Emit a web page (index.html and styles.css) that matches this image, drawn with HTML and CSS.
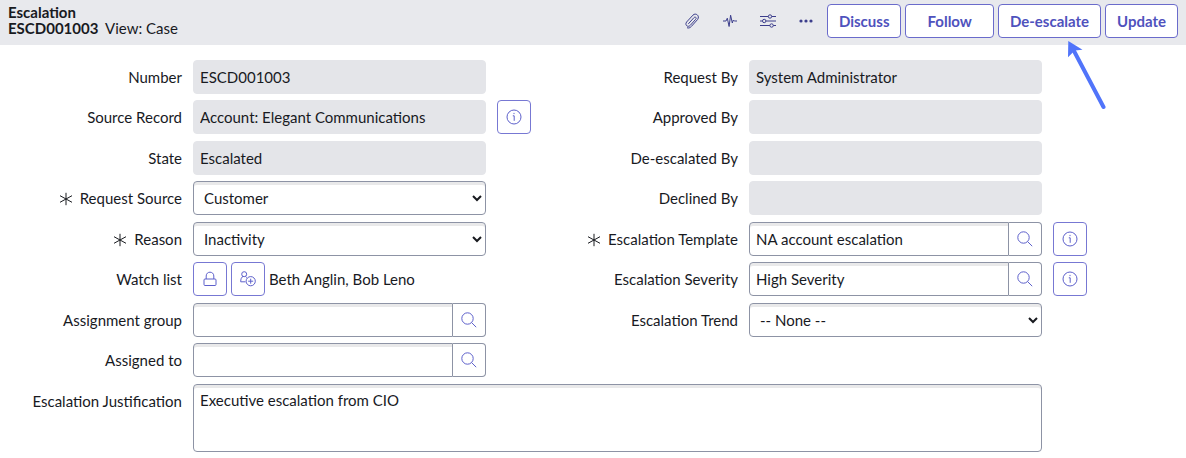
FILE: index.html
```html
<!DOCTYPE html>
<html lang="en">
<head>
  <meta charset="UTF-8">
  <meta name="viewport" content="width=device-width, initial-scale=1.0">
  <title>Escalation | ESCD001003</title>
  <link rel="stylesheet" href="styles.css">
</head>
<body>
  <!-- Shared icons -->
  <svg class="sprite" aria-hidden="true">
    <symbol id="icon-search" viewBox="0 0 16 16">
      <circle cx="6.5" cy="6.5" r="5.7"/>
      <path d="M10.6 10.6L15.2 15.2"/>
    </symbol>
    <symbol id="icon-info" viewBox="0 0 16 16">
      <circle cx="8" cy="8" r="7"/>
      <path d="M6.8 6.8H8.2V11.8M8 3.9V5.1"/>
    </symbol>
    <symbol id="icon-required" viewBox="0 0 14 14">
      <path d="M7 .8V13.2M1 3.7L13 10.3M13 3.7L1 10.3"/>
    </symbol>
  </svg>

  <header class="header">
    <h1 class="title">Escalation<br>ESCD001003 <span class="view">View: Case</span></h1>
    <div class="actions">
      <button class="icon-btn" aria-label="Attachments">
        <svg class="icon" viewBox="0 0 16 16"><path d="M4.3 10.9L9.9 4.7C11.3 3.2 13 4.8 11.7 6.3L6.2 12.4C4.2 14.7.3 12.3 2.6 9L9 2.1C11.6-.6 16.2 2.7 13.6 6.5L7.3 13.5C6 14.9 4.4 15.4 3 14.7"/></svg>
      </button>
      <button class="icon-btn" aria-label="Activity">
        <svg class="icon" viewBox="0 0 16 16"><path d="M1 8H4L5.3 5.2L7.1 13.5L8.6 2.2L10.3 10L11.3 7L12.3 8H15"/></svg>
      </button>
      <button class="icon-btn" aria-label="Personalize form">
        <svg class="icon" viewBox="0 0 16 16"><path d="M0 3.5H8.3M11.7 3.5H16M0 8H2.5M5.9 8H16M0 12.5H9.9M13.3 12.5H16"/><circle cx="10" cy="3.5" r="1.7"/><circle cx="4.2" cy="8" r="1.7"/><circle cx="11.6" cy="12.5" r="1.7"/></svg>
      </button>
      <button class="icon-btn" aria-label="More options">
        <svg class="icon dots" viewBox="0 0 16 16"><circle cx="3" cy="8" r="1.6"/><circle cx="8" cy="8" r="1.6"/><circle cx="13" cy="8" r="1.6"/></svg>
      </button>
      <button class="btn">Discuss</button>
      <button class="btn btn-wide">Follow</button>
      <div class="pointed">
        <button class="btn">De-escalate</button>
        <svg class="arrow" viewBox="0 0 40 70" aria-hidden="true"><path class="arrow-line" d="M8 11L37.5 67"/><path class="arrow-head" d="M2.3 1L16.5 9.7L8.8 10.6L2 17.3Z"/></svg>
      </div>
      <button class="btn">Update</button>
    </div>
  </header>

  <form class="form">
    <div class="columns">
      <div class="column">
        <div class="row">
          <label for="number">Number</label>
          <input id="number" class="field" type="text" value="ESCD001003" readonly>
        </div>
        <div class="row">
          <label for="source">Source Record</label>
          <input id="source" class="field" type="text" value="Account: Elegant Communications" readonly>
          <button type="button" class="square-btn" aria-label="Preview source record"><svg class="icon"><use href="#icon-info"/></svg></button>
        </div>
        <div class="row">
          <label for="state">State</label>
          <input id="state" class="field" type="text" value="Escalated" readonly>
        </div>
        <div class="row">
          <label for="requestSource"><svg class="required"><use href="#icon-required"/></svg>Request Source</label>
          <select id="requestSource" class="field"><option>Customer</option></select>
        </div>
        <div class="row">
          <label for="reason"><svg class="required"><use href="#icon-required"/></svg>Reason</label>
          <select id="reason" class="field"><option>Inactivity</option></select>
        </div>
        <div class="row">
          <span class="label">Watch list</span>
          <div class="watch">
            <button type="button" class="square-btn" aria-label="Unlock watch list">
              <svg class="icon" viewBox="0 0 16 16"><rect x="2" y="8" width="12" height="6.5" rx="1"/><path d="M4.2 8V5C4.2-.1 11.8-.1 11.8 5V8"/></svg>
            </button>
            <button type="button" class="square-btn" aria-label="Add me">
              <svg class="icon" viewBox="0 0 16 16"><circle cx="4.2" cy="3.2" r="2.5"/><path d="M3 5.4C1.4 6.2.7 8 .7 10.8H5.4M5.5 5.4L6.8 6.6"/><circle cx="10.7" cy="10.2" r="4.6"/><path d="M10.7 7.7V12.7M8.2 10.2H13.2"/></svg>
            </button>
            <span>Beth Anglin, Bob Leno</span>
          </div>
        </div>
        <div class="row">
          <label for="group">Assignment group</label>
          <div class="lookup">
            <input id="group" class="field" type="text">
            <button type="button" aria-label="Look up assignment group"><svg class="icon"><use href="#icon-search"/></svg></button>
          </div>
        </div>
        <div class="row">
          <label for="assigned">Assigned to</label>
          <div class="lookup">
            <input id="assigned" class="field" type="text">
            <button type="button" aria-label="Look up assigned to"><svg class="icon"><use href="#icon-search"/></svg></button>
          </div>
        </div>
      </div>

      <div class="column">
        <div class="row">
          <label for="requestBy">Request By</label>
          <input id="requestBy" class="field" type="text" value="System Administrator" readonly>
        </div>
        <div class="row">
          <label for="approvedBy">Approved By</label>
          <input id="approvedBy" class="field" type="text" readonly>
        </div>
        <div class="row">
          <label for="deescalatedBy">De-escalated By</label>
          <input id="deescalatedBy" class="field" type="text" readonly>
        </div>
        <div class="row">
          <label for="declinedBy">Declined By</label>
          <input id="declinedBy" class="field" type="text" readonly>
        </div>
        <div class="row">
          <label for="template"><svg class="required"><use href="#icon-required"/></svg>Escalation Template</label>
          <div class="lookup">
            <input id="template" class="field" type="text" value="NA account escalation">
            <button type="button" aria-label="Look up template"><svg class="icon"><use href="#icon-search"/></svg></button>
          </div>
          <button type="button" class="square-btn" aria-label="Preview template"><svg class="icon"><use href="#icon-info"/></svg></button>
        </div>
        <div class="row">
          <label for="severity">Escalation Severity</label>
          <div class="lookup">
            <input id="severity" class="field" type="text" value="High Severity">
            <button type="button" aria-label="Look up severity"><svg class="icon"><use href="#icon-search"/></svg></button>
          </div>
          <button type="button" class="square-btn" aria-label="Preview severity"><svg class="icon"><use href="#icon-info"/></svg></button>
        </div>
        <div class="row">
          <label for="trend">Escalation Trend</label>
          <select id="trend" class="field"><option>-- None --</option></select>
        </div>
      </div>
    </div>

    <div class="row">
      <label for="justification">Escalation Justification</label>
      <textarea id="justification" class="field">Executive escalation from CIO</textarea>
    </div>
  </form>
</body>
</html>
```
FILE: styles.css
```css
* {
  box-sizing: border-box;
}
body {
  margin: 0;
  background: #fff;
  color: #181a1f;
  font-family: Lato, "Liberation Sans", sans-serif;
  font-size: 15px;
  line-height: 18px;
}
button, input, select, textarea {
  margin: 0;
  font: inherit;
  color: inherit;
}
button {
  padding: 0;
  cursor: pointer;
}
.sprite {
  display: none;
}
symbol, .icon, .required {
  fill: none;
  stroke: currentColor;
}
.icon {
  display: block;
  width: 16px;
  height: 16px;
}

/* Header */
.header {
  display: flex;
  justify-content: space-between;
  align-items: flex-start;
  min-height: 45px;
  padding: 4px 8px 0;
  background: #e8e9ed;
}
.title {
  margin: 0;
  font-size: 15px;
  line-height: 16px;
  font-weight: bold;
}
.view {
  margin-left: 3px;
  font-weight: normal;
}
.actions {
  display: flex;
  gap: 4px;
}
.icon-btn {
  display: flex;
  align-items: center;
  justify-content: center;
  width: 34px;
  height: 34px;
  border: 0;
  background: none;
  color: #3c3e8c;
}
.dots {
  fill: currentColor;
  stroke: none;
}
.btn {
  height: 34px;
  padding: 0 11px;
  border: 1px solid #6a6bcb;
  border-radius: 4px;
  background: #fff;
  color: #4f52bd;
  font-weight: bold;
}
.btn-wide {
  padding: 0 21px;
}
.pointed {
  position: relative;
}
.arrow {
  position: absolute;
  top: 36px;
  right: -5px;
  width: 40px;
  height: 70px;
}
.arrow-line {
  fill: none;
  stroke: #5174fa;
  stroke-width: 4;
  stroke-linecap: round;
}
.arrow-head {
  fill: #5174fa;
}

/* Form */
.form {
  padding: 15px 74px 6px 0;
}
.columns {
  display: grid;
  grid-template-columns: 1fr 1fr;
}
.row {
  display: grid;
  grid-template-columns: 182px minmax(0, 1fr) 59px;
  column-gap: 11px;
  margin-bottom: 6px;
}
.row:nth-child(even) {
  margin-bottom: 7px;
}
label, .label {
  padding-top: 8px;
  text-align: right;
}
.required {
  width: 14px;
  height: 14px;
  margin-right: 7px;
  vertical-align: -2px;
}
.field {
  width: 100%;
  height: 34px;
  padding: 0 6px;
  border: 1px solid #8d93a5;
  border-radius: 4px;
  background: #fff;
  box-shadow: inset 0 3px 0 #e9e9ea;
}
.field:read-only:not(select) {
  border-color: #e4e5e9;
  background: #e4e5e9;
  box-shadow: none;
}
select.field {
  padding-right: 0;
}
textarea.field {
  display: block;
  height: 68px;
  padding: 6px;
  resize: none;
}
.lookup {
  display: flex;
}
.lookup .field {
  flex: 1;
  min-width: 0;
  border-radius: 4px 0 0 4px;
}
.lookup button {
  display: flex;
  align-items: center;
  justify-content: center;
  width: 33px;
  height: 34px;
  border: 1px solid #8d93a5;
  border-left: 0;
  border-radius: 0 4px 4px 0;
  background: #fff;
  color: #5d60cb;
}
.square-btn {
  display: flex;
  align-items: center;
  justify-content: center;
  width: 34px;
  height: 34px;
  border: 1px solid #7778d3;
  border-radius: 4px;
  background: #fff;
  color: #5d60cb;
}
.watch {
  display: flex;
  align-items: center;
  gap: 4px;
}
```
